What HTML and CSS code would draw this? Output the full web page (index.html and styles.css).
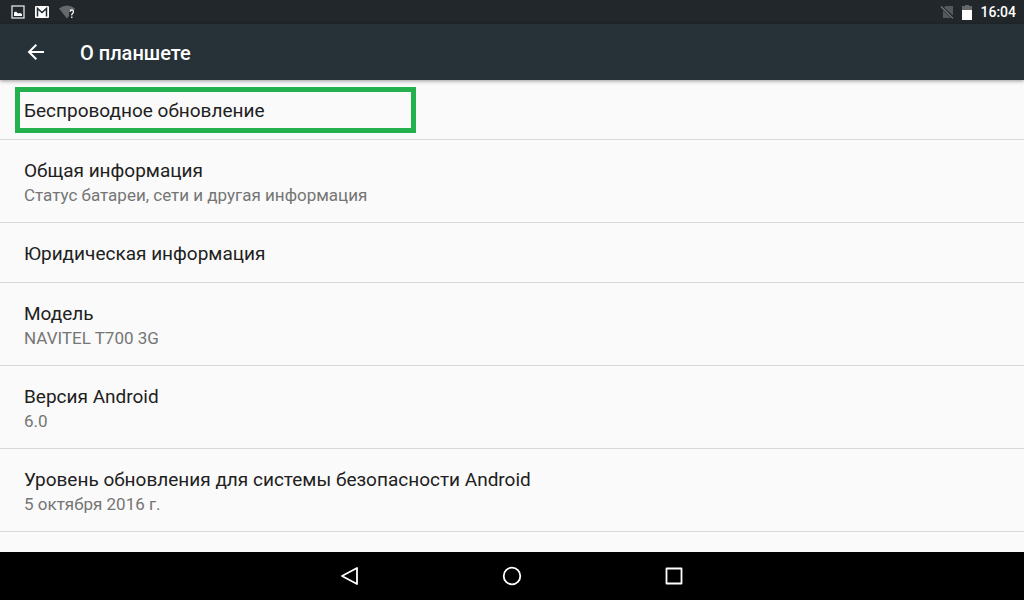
FILE: index.html
```html
<!DOCTYPE html>
<html lang="ru">
<head>
    <meta charset="utf-8">
    <meta name="viewport" content="width=device-width, initial-scale=1">
    <title>О планшете</title>
    <link rel="stylesheet" href="styles.css">
</head>
<body>
    <div class="status-bar">
        <div class="status-icons">
            <svg width="14" height="14" viewBox="0 0 14 14">
                <rect x="1" y="1" width="12" height="12" fill="none" stroke="#d6d7d8" stroke-width="1.4"/>
                <path d="M3 11V7.500l2-1 2 2 2-.5 2 1v2z" fill="#fff"/>
            </svg>
            <svg width="14" height="14" viewBox="0 0 14 14">
                <rect x="0" y="1" width="14" height="12" rx="1" fill="#fff"/>
                <path d="M2.500 11.500V3.500L7 7.500l4.500-4v8" fill="none" stroke="#23292d" stroke-width="1.500"/>
            </svg>
            <svg width="18" height="14" viewBox="0 0 18 14">
                <path d="M0 3.500Q8 -2.500 16 3.500L14.500 5.500Q10 3.500 10 8V11L8 13.500z" fill="#65696c"/>
                <path d="M11.200 6.800Q11.200 5 12.800 5T14.400 6.700Q14.400 7.700 13.500 8.400T12.800 10.300M12.800 11.500V13" fill="none" stroke="#fff" stroke-width="1.300"/>
            </svg>
        </div>
        <div class="status-icons status-right">
            <svg width="14" height="14" viewBox="0 0 14 14">
                <path d="M5.500 1H13v9.500L4 2.500zM3 5.200L11 13H3z" fill="#54595c"/>
                <path d="M1 1.500L13 13.300" stroke="#7b7f81" stroke-width="1.100"/>
            </svg>
            <svg width="10" height="15" viewBox="0 0 10 15">
                <path d="M0 1h3V0h4v1h3v4H0z" fill="#64686a"/>
                <path d="M0 5h10v10H0z" fill="#fff"/>
            </svg>
            <span class="clock">16:04</span>
        </div>
    </div>
    <header class="app-bar">
        <button class="back" type="button" aria-label="Назад">
            <svg width="24" height="24" viewBox="0 0 24 24">
                <path d="M20 12H5.500M12.300 4.700L5 12l7.300 7.300" fill="none" stroke="#fff" stroke-width="2"/>
            </svg>
        </button>
        <h1>О планшете</h1>
    </header>
    <main class="settings">
        <a class="item selected" href="#update">
            <span class="title">Беспроводное обновление</span>
        </a>
        <a class="item" href="#status">
            <span class="title">Общая информация</span>
            <span class="summary">Статус батареи, сети и другая информация</span>
        </a>
        <a class="item" href="#legal">
            <span class="title">Юридическая информация</span>
        </a>
        <a class="item" href="#model">
            <span class="title">Модель</span>
            <span class="summary">NAVITEL T700 3G</span>
        </a>
        <a class="item" href="#version">
            <span class="title">Версия Android</span>
            <span class="summary">6.0</span>
        </a>
        <a class="item" href="#security">
            <span class="title">Уровень обновления для системы безопасности Android</span>
            <span class="summary">5 октября 2016 г.</span>
        </a>
    </main>
    <nav class="nav-bar">
        <button type="button" aria-label="Назад">
            <svg width="24" height="24" viewBox="0 0 24 24">
                <path d="M19 4v16L4 12z" fill="none" stroke="#fff" stroke-width="1.800" stroke-linejoin="round"/>
            </svg>
        </button>
        <button type="button" aria-label="Главный экран">
            <svg width="24" height="24" viewBox="0 0 24 24">
                <circle cx="12" cy="12" r="8.300" fill="none" stroke="#fff" stroke-width="1.800"/>
            </svg>
        </button>
        <button type="button" aria-label="Недавние приложения">
            <svg width="24" height="24" viewBox="0 0 24 24">
                <rect x="4.500" y="4.500" width="15" height="15" fill="none" stroke="#fff" stroke-width="1.800" stroke-linejoin="round"/>
            </svg>
        </button>
    </nav>
</body>
</html>
```
FILE: styles.css
```css
body {
    margin: 0;
    height: 100vh;
    display: flex;
    flex-direction: column;
    font-family: Roboto, sans-serif;
    background-color: #fafafa;
}
svg {
    display: block;
}
button {
    padding: 0;
    border: none;
    background: none;
    cursor: pointer;
}
.status-bar {
    display: flex;
    justify-content: space-between;
    align-items: center;
    height: 24px;
    padding: 0 8px 0 11px;
    background-color: #21272b;
}
.status-icons {
    display: flex;
    align-items: center;
    gap: 10px;
}
.status-right {
    gap: 8px;
}
.clock {
    font-size: 14px;
    font-weight: 500;
    color: #fff;
}
.app-bar {
    position: relative;
    display: flex;
    align-items: center;
    gap: 32px;
    height: 56px;
    padding: 0 24px;
    background-color: #263238;
    box-shadow: 0 1px 4px rgba(0, 0, 0, 0.4);
}
.app-bar h1 {
    margin: 0;
    padding-top: 2px;
    font-size: 20px;
    font-weight: 500;
    color: #fff;
}
.settings {
    flex: 1;
    min-height: 0;
    overflow: hidden;
}
.item {
    position: relative;
    display: block;
    min-height: 27px;
    padding: 18px 24px 14px;
    border-bottom: 1px solid #d9d9d9;
    text-decoration: none;
}
.title, .summary {
    display: block;
    line-height: 25px;
}
.title {
    font-size: 19px;
    color: #212121;
}
.summary {
    font-size: 17px;
    color: #757575;
}
/* highlight frame over the row */
.selected::after {
    content: "";
    position: absolute;
    top: 7px;
    bottom: 6px;
    left: 15px;
    width: 391px;
    border: 5px solid #22b14c;
}
.nav-bar {
    display: flex;
    justify-content: center;
    align-items: center;
    gap: 138px;
    height: 48px;
    background-color: #000;
}
```
